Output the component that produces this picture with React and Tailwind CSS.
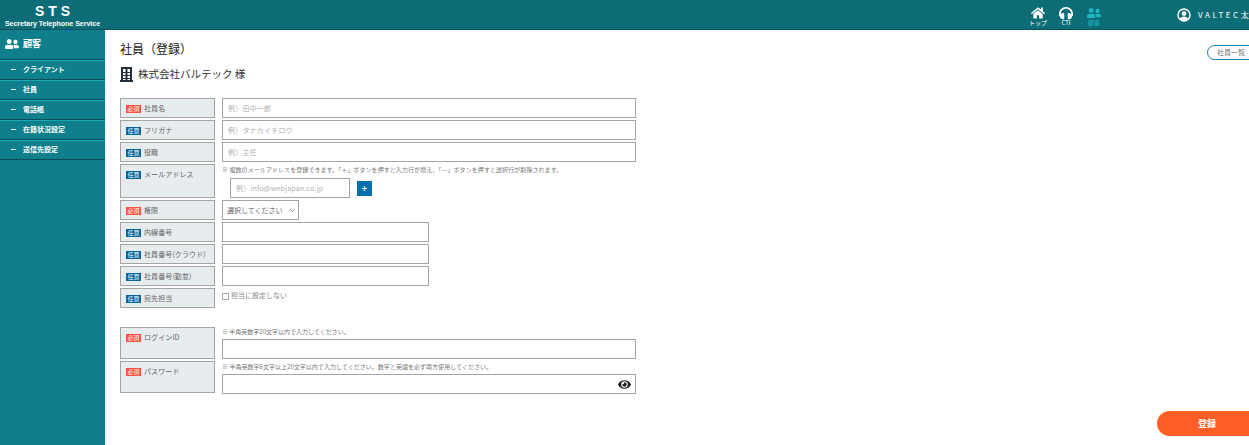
import { FaHome, FaHeadphones, FaUserFriends, FaEye } from 'react-icons/fa';
import { ChevronDown } from 'lucide-react';

const sideItems = ['クライアント', '社員', '電話帳', '在籍状況設定', '送信先設定'];

function Badge({ required }) {
  return (
    <span className={`flex h-[8px] w-[15px] shrink-0 items-center justify-center text-[6px] leading-none text-white ${required ? 'bg-[#fb4f3f]' : 'bg-[#04669c]'}`}>
      {required ? '必須' : '任意'}
    </span>
  );
}

function Label({ required, text, className = 'h-[20px]' }) {
  return (
    <div className={`flex w-[95px] shrink-0 gap-[3px] border border-[#a5a5a5] bg-[#e7ecef] pl-[5px] pt-[5px] text-[7px] leading-[9px] tracking-[0.1px] text-[#666] ${className}`}>
      <span className="mt-[1px]"><Badge required={required} /></span>
      <span className="whitespace-nowrap">{text}</span>
    </div>
  );
}

function Field({ placeholder, width = 'w-[414px]' }) {
  return (
    <div className={`flex h-[20px] items-center border border-[#a5a5a5] bg-white pl-[5px] text-[7px] tracking-[0.2px] text-[#b0b0b0] ${width}`}>
      {placeholder}
    </div>
  );
}

function Row({ required, text, children }) {
  return (
    <div className="flex h-[20px] gap-[7px]">
      <Label required={required} text={text} />
      {children}
    </div>
  );
}

function NavIcon({ icon, label, active }) {
  return (
    <div className={`flex w-[28px] flex-col items-center ${active ? 'text-[#1fb5c4]' : 'text-white'}`}>
      {icon}
      <span className="mt-[-1px] text-[6px] leading-[8px]">{label}</span>
    </div>
  );
}

function BuildingIcon() {
  return (
    <svg width="13" height="15" viewBox="0 0 13 15" fill="#25303a">
      <rect x="1" y="0" width="11" height="2" />
      <rect x="0" y="13" width="13" height="2" />
      <rect x="1" y="2" width="2" height="11" />
      <rect x="5.5" y="2" width="2" height="11" />
      <rect x="10" y="2" width="2" height="11" />
      <rect x="3" y="5" width="7" height="1" />
      <rect x="3" y="8" width="7" height="1" />
      <rect x="3" y="11" width="7" height="1" />
    </svg>
  );
}

export default function App() {
  return (
    <div className="flex h-[445px] w-[1249px] flex-col overflow-hidden bg-white font-['Noto_Sans_CJK_JP','Noto_Sans',sans-serif]">
      <header className="flex h-[30px] shrink-0 items-center border-b border-[#0a5159] bg-[#0d6d77] text-white">
        <div className="flex w-[105px] shrink-0 flex-col items-center pt-[1px]">
          <span className="pl-[4px] font-['Liberation_Sans',sans-serif] text-[14px] font-bold leading-[16px] tracking-[4px]">STS</span>
          <span className="whitespace-nowrap font-['Liberation_Sans',sans-serif] text-[7px] font-bold leading-[9px]">Secretary Telephone Service</span>
        </div>
        <div className="ml-[919px] flex shrink-0 pt-[3px]">
          <NavIcon icon={<FaHome size={14} />} label="トップ" />
          <NavIcon icon={<FaHeadphones size={14} />} label="CTI" />
          <NavIcon icon={<FaUserFriends size={14} />} label="顧客" active />
        </div>
        <div className="ml-[69px] flex shrink-0 items-center gap-[7px]">
          <svg width="14" height="14" viewBox="0 0 14 14">
            <circle cx="7" cy="7" r="6" fill="none" stroke="white" strokeWidth="1.4" />
            <circle cx="7" cy="5.6" r="2.4" fill="white" />
            <path d="M2.8 11.2c.8-2 2.4-2.8 4.2-2.8s3.4.8 4.2 2.8C10 12.4 8.6 13 7 13s-3-.6-4.2-1.8z" fill="white" />
          </svg>
          <span className="whitespace-nowrap text-[8px] tracking-[2.6px]">VALTEC太郎</span>
        </div>
      </header>
      <div className="flex min-h-0 flex-1">
        <aside className="w-[105px] shrink-0 bg-[#0f7f8b] text-white">
          <div className="flex h-[30px] items-center gap-[4px] border-b border-[#0a4f58] pb-[1px] pl-[5px] text-[9px] font-bold">
            <FaUserFriends size={14} />
            <span>顧客</span>
          </div>
          {sideItems.map((item) => (
            <div key={item} className="flex h-[20px] items-center border-b border-t border-b-[#0a4f58] border-t-[#18a7b5] pb-[2px] text-[7px] font-bold">
              <span className="ml-[11px] h-[1px] w-[5px] bg-white" />
              <span className="ml-[7px]">{item}</span>
            </div>
          ))}
        </aside>
        <main className="min-w-0 flex-1 pl-[15px]">
          <div className="flex items-start justify-between">
            <h1 className="pt-[10px] text-[12px] leading-[18px] text-[#222]">社員（登録）</h1>
            <div className="mt-[15px] mr-[-14px] flex h-[15px] w-[56px] items-center rounded-l-full border border-[#1a7db5] pl-[9px] text-[7px] text-[#777]">社員一覧</div>
          </div>
          <div className="mt-[6px] flex h-[16px] items-center gap-[5px] text-[10.5px] text-[#333]">
            <BuildingIcon />
            <span>株式会社バルテック 様</span>
          </div>

          <div className="mt-[16px] flex flex-col gap-[2px]">
            <Row required text="社員名"><Field placeholder="例）田中一郎" /></Row>
            <Row text="フリガナ"><Field placeholder="例）タナカイチロウ" /></Row>
            <Row text="役職"><Field placeholder="例）主任" /></Row>
            <div className="flex h-[34px] gap-[7px]">
              <Label text="メールアドレス" className="h-[34px]" />
              <div>
                <p className="h-[14px] whitespace-nowrap text-[6px] leading-[12px] tracking-[0.07px] text-[#777]">※ 複数のメールアドレスを登録できます。「＋」ボタンを押すと入力行が増え、「－」ボタンを押すと選択行が削除されます。</p>
                <div className="flex items-center gap-[7px] pl-[8px]">
                  <Field placeholder="例）info@webjapan.co.jp" width="w-[120px]" />
                  <div className="flex h-[15px] w-[15px] items-center justify-center bg-[#0670ae] text-[9px] font-bold leading-none text-white">+</div>
                </div>
              </div>
            </div>
            <Row required text="権限">
              <div className="flex h-[20px] w-[77px] items-center gap-[5px] border border-[#a5a5a5] pl-[4px] text-[7px] whitespace-nowrap text-[#666]">
                選択してください
                <ChevronDown size={9} strokeWidth={2} />
              </div>
            </Row>
            <Row text="内線番号"><Field width="w-[207px]" /></Row>
            <Row text="社員番号(クラウド)"><Field width="w-[207px]" /></Row>
            <Row text="社員番号(勤怠)"><Field width="w-[207px]" /></Row>
            <Row text="宛先担当">
              <div className="flex h-[14px] items-center gap-[2px] text-[7px] text-[#888]">
                <span className="mt-[3px] h-[7px] w-[7px] border border-[#aaa]" />
                <span>担当に設定しない</span>
              </div>
            </Row>
          </div>

          <div className="mt-[19px] flex flex-col gap-[2px]">
            <div className="flex h-[32px] gap-[7px]">
              <Label required text="ログインID" className="h-[32px]" />
              <div>
                <p className="h-[12px] text-[6px] leading-[10px] text-[#777]">※ 半角英数字20文字以内で入力してください。</p>
                <Field />
              </div>
            </div>
            <div className="flex h-[32px] gap-[7px]">
              <Label required text="パスワード" className="h-[32px]" />
              <div>
                <p className="h-[13px] text-[6px] leading-[11px] tracking-[0.03px] text-[#777]">※ 半角英数字6文字以上20文字以内で入力してください。数字と英語を必ず両方使用してください。</p>
                <div className="flex h-[20px] w-[414px] items-center justify-end border border-[#a5a5a5] pr-[4px] text-[#222]">
                  <FaEye size={13} />
                </div>
              </div>
            </div>
          </div>

          <div className="mt-[18px] flex justify-end">
            <div className="mr-[-15px] flex h-[25px] w-[107px] items-center justify-center rounded-l-full bg-[#ff5f24] pr-[7px] text-[9px] font-bold text-white">登録</div>
          </div>
        </main>
      </div>
    </div>
  );
}
